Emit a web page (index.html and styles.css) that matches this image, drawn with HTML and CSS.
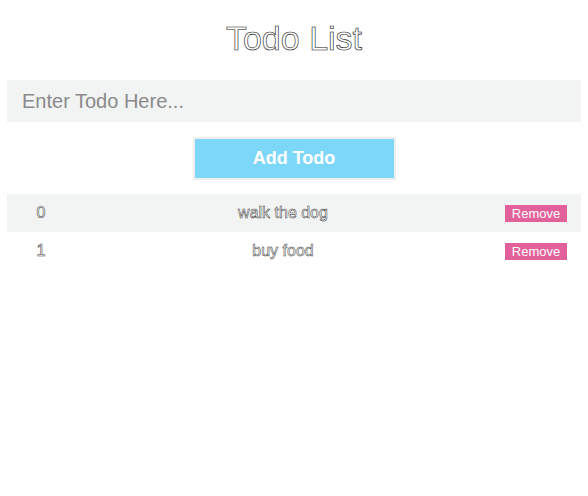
FILE: index.html
```html
<!DOCTYPE html>
<html>
<head>
<meta charset="utf-8">
<link rel="stylesheet" href="styles.css">
</head>
<body>
<div class="app">
  <h1 class="title">Todo List</h1>
  <input class="todo-input" type="text" placeholder="Enter Todo Here...">
  <div class="actions">
    <button class="add-btn">Add Todo</button>
  </div>
  <div class="list">
    <div class="row shaded">
      <span class="idx">0</span>
      <span class="text">walk the dog</span>
      <span class="act"><button class="remove">Remove</button></span>
    </div>
    <div class="row">
      <span class="idx">1</span>
      <span class="text">buy food</span>
      <span class="act"><button class="remove">Remove</button></span>
    </div>
  </div>
</div>
</body>
</html>
```

FILE: styles.css
```css
html, body {
  margin: 0;
  padding: 0;
  background: #fff;
}
body {
  font-family: "Liberation Sans", Arial, Helvetica, sans-serif;
}
.app {
  padding: 18px 7px 0 7px;
  display: flex;
  flex-direction: column;
}
.title {
  margin: 0;
  font-size: 34px;
  line-height: 40px;
  font-weight: normal;
  text-align: center;
  color: #fff;
  -webkit-text-stroke: 0.6px #111;
}
.todo-input {
  margin-top: 22px;
  height: 42px;
  box-sizing: border-box;
  border: none;
  outline: none;
  background: #f2f3f3;
  padding: 0 15px;
  font-family: "Liberation Sans", Arial, sans-serif;
  font-size: 20px;
  color: #333;
}
.todo-input::placeholder {
  color: #8a8a8a;
}
.actions {
  margin-top: 15px;
  display: flex;
  justify-content: center;
}
.add-btn {
  width: 203px;
  height: 43px;
  box-sizing: border-box;
  border: 2px solid #eeeeee;
  background: #7dd7f9;
  color: #fff;
  font-family: "Liberation Sans", Arial, sans-serif;
  font-weight: bold;
  font-size: 18px;
  padding: 0;
}
.list {
  margin-top: 14px;
  display: flex;
  flex-direction: column;
}
.row {
  display: grid;
  grid-template-columns: 68px 1fr 90px;
  align-items: center;
  height: 38px;
  font-size: 16px;
  color: #fff;
  -webkit-text-stroke: 0.5px #333;
}
.row.shaded {
  background: #f2f3f3;
}
.idx, .text, .act {
  text-align: center;
}
.act {
  display: flex;
  justify-content: center;
}
.remove {
  -webkit-text-stroke: 0;
  border: none;
  background: #e2619b;
  color: #fff;
  font-family: "Liberation Sans", Arial, sans-serif;
  font-size: 13px;
  line-height: 17px;
  height: 17px;
  padding: 0 5px;
  width: 62px;
}
```
